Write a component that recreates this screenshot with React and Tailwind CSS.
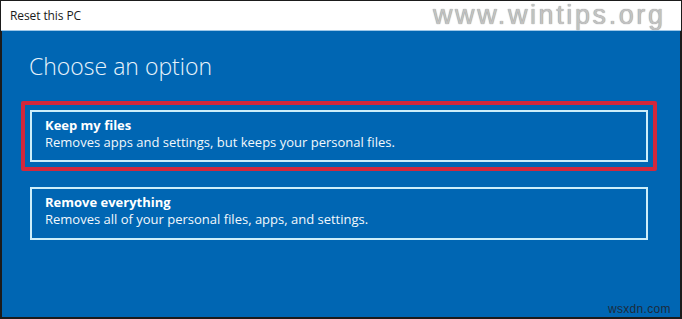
export default function App() {
  return (
    <div className="w-[682px] h-[319px] bg-[#1b1b1b] flex flex-col relative overflow-hidden" style={{ fontFamily: '"Open Sans", "Noto Sans", sans-serif' }}>
      {/* Title bar */}
      <div className="h-[30px] mt-[1px] mx-[1px] bg-white border-b border-[#9cc7e8] flex items-center pl-[9px]">
        <span className="text-[12px] text-[#1a1a1a] tracking-[-0.1px]">Reset this PC</span>
      </div>

      {/* Main panel */}
      <div className="flex-1 bg-[#0066b3] ml-[2px] mr-[2px] mb-[2px] pt-[20px] text-white">
        <h1 className="ml-[27px] text-[23px] font-light leading-[30px] text-[#e8f3fb]">Choose an option</h1>

        <div className="mt-[20px] ml-[19px] w-[636px] border-4 border-[#d3283c] rounded-[2px] p-[5px]">
          <div className="h-[52px] border-2 border-[#cdeefa] pl-[13px] pt-[5px]">
            <div className="text-[13px] font-bold leading-[17px]">Keep my files</div>
            <div className="text-[13px] leading-[17px] text-[#f2f8fc]">Removes apps and settings, but keeps your personal files.</div>
          </div>
        </div>

        <div className="mt-[16px] ml-[28px] w-[618px] h-[53px] border-2 border-[#cdeefa] pl-[13px] pt-[5px]">
          <div className="text-[13px] font-bold leading-[17px]">Remove everything</div>
          <div className="text-[13px] leading-[17px] text-[#f2f8fc]">Removes all of your personal files, apps, and settings.</div>
        </div>
      </div>

      {/* Watermarks */}
      <div
        className="absolute left-[433px] top-[-3px] text-[27px] leading-[36px] tracking-[2.6px] text-[#c2c2c2]"
        style={{ fontFamily: '"Liberation Sans", Arial, sans-serif', textShadow: '0 0 1px #7a7a7a' }}
      >
        www.wintips.org
      </div>
      <div
        className="absolute left-[608px] top-[302px] text-[12px] leading-[14px] tracking-[0.3px] text-[#1d2b3c]"
        style={{ fontFamily: '"Liberation Sans", Arial, sans-serif' }}
      >
        wsxdn.com
      </div>
    </div>
  );
}
